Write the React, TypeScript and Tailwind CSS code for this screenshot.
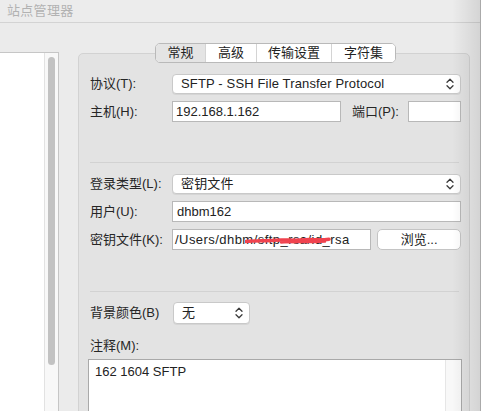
import React from "react";

const FONT = { fontFamily: '"Liberation Sans", "Noto Sans CJK SC", sans-serif' };

// tiny up/down chevron used by the popup buttons
const Updown: React.FC = () => (
  <svg width="8" height="12" viewBox="0 0 8 12" fill="none" stroke="#3a3a3a" strokeWidth={1.3} strokeLinecap="round" strokeLinejoin="round">
    <path d="M1 4.2L4 1.2L7 4.2" />
    <path d="M1 7.8L4 10.8L7 7.8" />
  </svg>
);

interface SelectProps {
  value: string;
  className?: string;
}

const PopupButton: React.FC<SelectProps> = ({ value, className }) => (
  <div
    className={`h-[20px] bg-white border border-[#c9c9c9] rounded-[4px] shadow-[0_1px_0_rgba(0,0,0,0.06)] flex items-center justify-between pl-[8px] pr-[6px] text-[13px] text-[#222] ${className ?? ""}`}
  >
    <span className="tracking-[0.15px]">{value}</span>
    <Updown />
  </div>
);

const TextBox: React.FC<{ value?: string; className?: string; children?: React.ReactNode }> = ({ value, className, children }) => (
  <div
    className={`relative h-[21px] bg-white border border-[#b8b8b8] flex items-center pl-[3px] text-[13px] text-[#222] whitespace-nowrap overflow-hidden ${className ?? ""}`}
  >
    {value}
    {children}
  </div>
);

const Label: React.FC<{ text: string }> = ({ text }) => (
  <div className="w-[82px] shrink-0 text-[13px] text-[#262626]">{text}</div>
);

const tabs = [
  { label: "常规", w: "w-[49px]", active: true },
  { label: "高级", w: "w-[51px]" },
  { label: "传输设置", w: "w-[75px]" },
  { label: "字符集", w: "w-[64px]" },
];

export default function App() {
  return (
    <div className="relative w-[488px] h-[411px] overflow-hidden bg-white" style={FONT}>
      <div className="w-[481px] h-full bg-[#ebebeb] flex flex-col border-r border-[#bdbdbd]">
        {/* title bar */}
        <div className="h-[23px] shrink-0 bg-[#ececec] border-b border-[#d3d3d3] pl-[7px] text-[13px] leading-[22px] text-[#b2b2b2] tracking-[0.3px]">
          站点管理器
        </div>

        <div className="flex-1 flex pt-[20px]">
          {/* site list */}
          <div className="w-[59px] shrink-0 mt-[9px] bg-white border-r border-t border-[#c6c6c6] flex justify-end">
            <div className="w-[14px] h-full bg-[#f8f8f8] border-l border-[#e2e2e2] flex justify-center">
              <div className="w-[7px] h-[308px] mt-[4px] rounded-full bg-[#c2c2c2]" />
            </div>
          </div>

          {/* tab view */}
          <div className="ml-[19px] w-[392px] flex flex-col">
            <div className="relative z-10 flex justify-center pl-[3px]">
              <div className="flex h-[20px] border border-[#b9b9b9] rounded-[5px] overflow-hidden bg-white text-[13px] text-[#222]">
                {tabs.map((t, i) => (
                  <div
                    key={t.label}
                    className={`${t.w} flex items-center justify-center ${t.active ? "bg-[#e4e4e4]" : "bg-white"} ${i > 0 ? "border-l border-[#d4d4d4]" : ""}`}
                  >
                    {t.label}
                  </div>
                ))}
              </div>
            </div>

            <div className="-mt-[10px] flex-1 bg-[#e3e3e3] border border-[#d2d2d2] rounded-[5px] pt-[20px] pl-[11px] pr-[8px]">
              <div className="flex items-center">
                <Label text="协议(T):" />
                <PopupButton value="SFTP - SSH File Transfer Protocol" className="w-[290px]" />
              </div>
              <div className="flex items-center mt-[7px]">
                <Label text="主机(H):" />
                <TextBox value="192.168.1.162" className="w-[169px]" />
                <div className="ml-[11px] w-[56px] text-[13px] text-[#262626]">端口(P):</div>
                <TextBox className="w-[53px]" />
              </div>

              <div className="mt-[40px] mr-[2px] h-px bg-[#d2d2d2]" />

              <div className="flex items-center mt-[11px]">
                <Label text="登录类型(L):" />
                <PopupButton value="密钥文件" className="w-[290px]" />
              </div>
              <div className="flex items-center mt-[7px]">
                <Label text="用户(U):" />
                <TextBox value="dhbm162" className="w-[290px] !pl-[4px]" />
              </div>
              <div className="flex items-center mt-[7px]">
                <Label text="密钥文件(K):" />
                <TextBox value="/Users/dhbm/sftp_rsa/id_rsa" className="w-[200px] !pl-[2px] tracking-[0.45px]">
                  <svg className="absolute left-[72px] top-[5px]" width="86" height="11" viewBox="0 0 86 11" fill="none">
                    <path
                      d="M1 6.5C10 5.5 20 6 30 5.2C40 4.6 50 5.8 60 4.8C68 4.2 75 5.6 84 4.2"
                      stroke="#f0434f"
                      strokeWidth={3.6}
                      strokeLinecap="round"
                    />
                    <path d="M36 7.5C50 6.8 64 7.6 80 6.6" stroke="#f0434f" strokeWidth={2.4} strokeLinecap="round" />
                  </svg>
                </TextBox>
                <div className="ml-[6px] w-[84px] h-[21px] bg-white border border-[#c4c4c4] rounded-[5px] flex items-center justify-center text-[13px] text-[#222]">
                  浏览...
                </div>
              </div>

              <div className="mt-[41px] mr-[2px] h-px bg-[#d2d2d2]" />

              <div className="flex items-center mt-[10px]">
                <Label text="背景颜色(B)" />
                <PopupButton value="无" className="w-[77px] h-[22px] ml-[1px]" />
              </div>

              <div className="mt-[14px] h-[16px] leading-[16px] text-[13px] text-[#262626]">注释(M):</div>

              <div className="mt-[5px] -ml-[2px] w-[374px] h-[60px] bg-white border-t border-l border-r border-[#a9a9a9] flex">
                <div className="flex-1 pl-[6px] pt-[2px] text-[13px] text-[#222]">162 1604 SFTP</div>
                <div className="w-[16px] h-full bg-[#f8f8f8] border-l border-[#e6e6e6]" />
              </div>
            </div>
          </div>
        </div>
      </div>

      {/* window edge shading */}
      <div className="absolute top-0 left-[452px] w-[29px] h-full bg-gradient-to-r from-transparent to-[rgba(0,0,0,0.1)] pointer-events-none" />
    </div>
  );
}
